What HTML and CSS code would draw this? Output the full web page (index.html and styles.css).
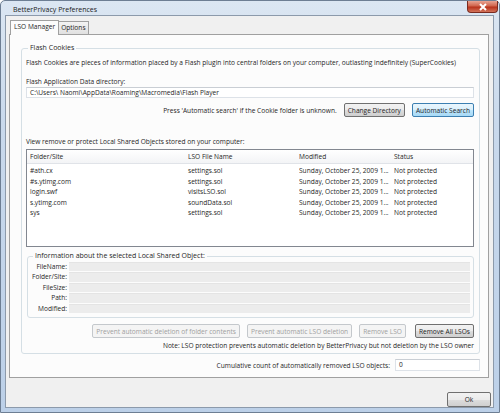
FILE: index.html
```html
<!DOCTYPE html>
<html lang="en">
<head>
    <meta charset="UTF-8">
    <title>BetterPrivacy Preferences</title>
    <link rel="stylesheet" href="styles.css">
</head>
<body>
    <div class="window">
        <div class="titlebar">
            <span class="title">BetterPrivacy Preferences</span>
            <span class="close-btn">
                <svg width="10" height="8" viewBox="0 0 10 8"><path d="M2 1 L8 7 M8 1 L2 7" stroke="#fff" stroke-width="2"/></svg>
            </span>
        </div>
        <div class="client">
            <div class="tabs">
                <span class="tab active">LSO Manager</span>
                <span class="tab">Options</span>
            </div>
            <div class="tab-panel">
                <fieldset class="group main-group">
                    <legend>Flash Cookies</legend>
                    <p class="line intro">Flash Cookies are pieces of information placed by a Flash plugin into central folders on your computer, outlasting indefinitely (SuperCookies)</p>
                    <p class="line dir-label">Flash Application Data directory:</p>
                    <div class="textbox">C:\Users\ Naomi\AppData\Roaming\Macromedia\Flash Player</div>
                    <div class="dir-row">
                        <span class="hint">Press 'Automatic search' if the Cookie folder is unknown.</span>
                        <button class="btn">Change Directory</button>
                        <button class="btn default">Automatic Search</button>
                    </div>
                    <p class="line view-label">View remove or protect Local Shared Objects stored on your computer:</p>
                    <div class="listbox">
                        <div class="list-row list-head">
                            <span class="col-site">Folder/Site</span>
                            <span class="col-file">LSO File Name</span>
                            <span class="col-mod">Modified</span>
                            <span class="col-status">Status</span>
                        </div>
                        <div class="list-body">
                            <div class="list-row">
                                <span class="col-site">#ath.cx</span>
                                <span class="col-file">settings.sol</span>
                                <span class="col-mod">Sunday, October 25, 2009 1...</span>
                                <span class="col-status">Not protected</span>
                            </div>
                            <div class="list-row">
                                <span class="col-site">#s.ytimg.com</span>
                                <span class="col-file">settings.sol</span>
                                <span class="col-mod">Sunday, October 25, 2009 1...</span>
                                <span class="col-status">Not protected</span>
                            </div>
                            <div class="list-row">
                                <span class="col-site">login.swf</span>
                                <span class="col-file">visitsLSO.sol</span>
                                <span class="col-mod">Sunday, October 25, 2009 1...</span>
                                <span class="col-status">Not protected</span>
                            </div>
                            <div class="list-row">
                                <span class="col-site">s.ytimg.com</span>
                                <span class="col-file">soundData.sol</span>
                                <span class="col-mod">Sunday, October 25, 2009 1...</span>
                                <span class="col-status">Not protected</span>
                            </div>
                            <div class="list-row">
                                <span class="col-site">sys</span>
                                <span class="col-file">settings.sol</span>
                                <span class="col-mod">Sunday, October 25, 2009 1...</span>
                                <span class="col-status">Not protected</span>
                            </div>
                        </div>
                    </div>
                    <fieldset class="group info-group">
                        <legend>Information about the selected Local Shared Object:</legend>
                        <div class="info-grid">
                            <span class="info-label">FileName:</span><span class="info-field"></span>
                            <span class="info-label">Folder/Site:</span><span class="info-field"></span>
                            <span class="info-label">FileSize:</span><span class="info-field"></span>
                            <span class="info-label">Path:</span><span class="info-field"></span>
                            <span class="info-label">Modified:</span><span class="info-field"></span>
                        </div>
                    </fieldset>
                    <div class="action-row">
                        <button class="btn" disabled>Prevent automatic deletion of folder contents</button>
                        <button class="btn" disabled>Prevent automatic LSO deletion</button>
                        <button class="btn" disabled>Remove LSO</button>
                        <button class="btn">Remove All LSOs</button>
                    </div>
                    <p class="line note">Note: LSO protection prevents automatic deletion by BetterPrivacy but not deletion by the LSO owner</p>
                </fieldset>
                <div class="count-row">
                    <span>Cumulative count of automatically removed LSO objects:</span>
                    <div class="textbox count-box">0</div>
                </div>
            </div>
            <div class="footer">
                <button class="btn ok-btn">Ok</button>
            </div>
        </div>
    </div>
</body>
</html>
```

FILE: styles.css
```css
* {
    margin: 0;
    padding: 0;
    box-sizing: border-box;
}

body {
    width: 500px;
    height: 413px;
    overflow: hidden;
    background: #ffffff;
    font-family: "Open Sans", "Noto Sans", sans-serif;
    font-size: 6.6px;
    color: #1e1e1e;
}

.window {
    width: 500px;
    height: 413px;
    background: linear-gradient(180deg, #dbe6f2 0%, #c9d9ec 30%, #bcd0e8 100%);
    border: 1px solid #6d7e93;
    border-radius: 5px 5px 0 0;
    display: flex;
    flex-direction: column;
    padding: 0 5px 4px 4px;
}

.titlebar {
    height: 16px;
    display: flex;
    align-items: flex-start;
    justify-content: space-between;
}

.title {
    font-size: 7px;
    margin: 4px 0 0 8px;
    color: #1a1a1a;
}

.close-btn {
    width: 31px;
    height: 12px;
    margin-right: -4px;
    background: linear-gradient(180deg, #e8a493 0%, #d0644c 45%, #b8321b 55%, #d2735a 100%);
    border: 1px solid #7a2a1f;
    border-top: none;
    border-radius: 0 0 4px 4px;
    display: flex;
    align-items: center;
    justify-content: center;
}

.client {
    flex: 1;
    background: #f0f0f0;
    border: 1px solid #8c9aab;
    padding: 4px 3px 0 3px;
    display: flex;
    flex-direction: column;
}

.tabs {
    display: flex;
    height: 14px;
    align-items: flex-end;
    padding-left: 1px;
}

.tab {
    height: 13px;
    padding: 0 2px;
    line-height: 12px;
    font-size: 6.6px;
    border: 1px solid #a0a0a0;
    border-bottom: none;
    background: linear-gradient(180deg, #f3f3f3, #e0e0e0);
    margin-right: -1px;
}

.tab.active {
    background: #fcfcfc;
    position: relative;
    z-index: 1;
    margin-bottom: -1px;
    height: 15px;
    padding: 0 3px;
}

.tab-panel {
    width: 480px;
    height: 344px;
    background: #fcfcfc;
    border: 1px solid #a0a0a0;
    padding: 8px 8px 0 11px;
}

.group {
    min-width: 0;
    border: 1px solid #d5dfe5;
    border-radius: 3px;
}

.group legend {
    padding: 0 2px;
    margin-left: 2px;
    line-height: 10px;
    font-size: 7px;
}

.main-group {
    height: 311px;
    padding: 0 5px 0 4px;
}

.line {
    line-height: 10px;
    white-space: nowrap;
}

.intro {
    margin-top: 5px;
}

.dir-label {
    margin-top: 9px;
}

.textbox {
    height: 11px;
    line-height: 9px;
    padding: 0 3px;
    background: #ffffff;
    border: 1px solid #dde2e8;
    border-top-color: #c9ced4;
    white-space: nowrap;
}

.dir-row {
    display: flex;
    justify-content: flex-end;
    align-items: center;
    gap: 7px;
    margin-top: 5px;
}

.btn {
    font-family: inherit;
    font-size: 6.6px;
    height: 14px;
    padding: 0 3px;
    color: #1e1e1e;
    background: linear-gradient(180deg, #f2f2f2 0%, #ebebeb 50%, #dddddd 51%, #cfcfcf 100%);
    border: 1px solid #707070;
    border-radius: 2px;
}

.btn.default {
    border-color: #3c7fb1;
    background: linear-gradient(180deg, #eaf6fd 0%, #d9f0fc 50%, #bee6fd 51%, #a7d9f5 100%);
}

.btn:disabled {
    color: #a0a0a0;
    background: #f4f4f4;
    border-color: #c4c8cc;
}

.view-label {
    margin-top: 20px;
}

.listbox {
    height: 98px;
    margin-top: 2px;
    background: #ffffff;
    border: 1px solid #828790;
}

.list-row {
    display: flex;
    height: 10.5px;
    line-height: 10.5px;
    white-space: nowrap;
}

.list-head {
    height: 14px;
    line-height: 13px;
    background: linear-gradient(180deg, #ffffff, #f3f4f6);
    border-bottom: 1px solid #e0e3e8;
    margin-bottom: 1px;
}

.list-body {
    padding-top: 1px;
}

.col-site {
    width: 161px;
    padding-left: 3px;
}

.col-file {
    width: 111px;
}

.col-mod {
    width: 95px;
    overflow: hidden;
}

.col-status {
    flex: 1;
}

.info-group {
    margin: 4px 0 0 1px;
    height: 67px;
    padding: 1px 3px 0 3px;
}

.info-grid {
    display: grid;
    grid-template-columns: 36px 1fr;
    column-gap: 2px;
    row-gap: 1px;
}

.info-label {
    text-align: right;
    line-height: 9.4px;
    height: 9.4px;
}

.info-field {
    height: 9.4px;
    background: #ececec;
    border-top: 1px solid #e4e4e4;
}

.action-row {
    display: flex;
    justify-content: flex-end;
    gap: 7px;
    margin-top: 6px;
}

.action-row .btn:last-child {
    margin-left: 2px;
}

.note {
    text-align: right;
    margin-top: 3px;
}

.count-row {
    display: flex;
    justify-content: flex-end;
    align-items: center;
    gap: 5px;
    margin-top: 5px;
}

.count-box {
    width: 85px;
    height: 12px;
}

.footer {
    flex: 1;
    display: flex;
    justify-content: flex-end;
    align-items: flex-start;
    padding-top: 14px;
}

.ok-btn {
    width: 44px;
    height: 15px;
    margin-right: -1px;
}
```
